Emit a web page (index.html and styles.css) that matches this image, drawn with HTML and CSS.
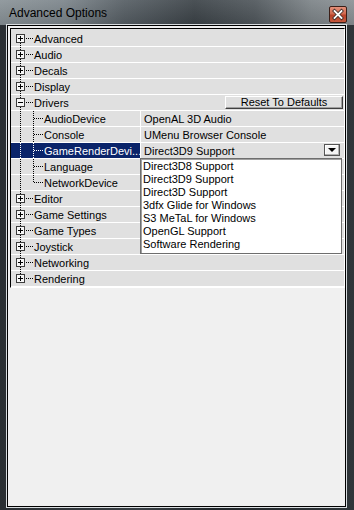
FILE: index.html
```html
<!DOCTYPE html>
<html lang="en">
<head>
    <meta charset="UTF-8">
    <title>Advanced Options</title>
    <link rel="stylesheet" href="styles.css">
</head>
<body>
    <div class="window">
        <div class="titlebar">
            <span class="title">Advanced Options</span>
            <span class="close">
                <svg width="16" height="15" viewBox="0 0 16 15">
                    <path d="M4.5 4 L11.5 11 M11.5 4 L4.5 11" stroke="#3a2a26" stroke-width="3.4" stroke-linecap="square"/>
                    <path d="M4.5 4 L11.5 11 M11.5 4 L4.5 11" stroke="#ffffff" stroke-width="1.8" stroke-linecap="square"/>
                </svg>
            </span>
        </div>
        <div class="client">
            <div class="panel">
                <div class="tree">
                    <div class="vline main"></div>
                    <div class="vline sub"></div>

                    <div class="row"><span class="box plus"></span><span class="dash"></span><span class="label">Advanced</span></div>
                    <div class="row"><span class="box plus"></span><span class="dash"></span><span class="label">Audio</span></div>
                    <div class="row"><span class="box plus"></span><span class="dash"></span><span class="label">Decals</span></div>
                    <div class="row"><span class="box plus"></span><span class="dash"></span><span class="label">Display</span></div>
                    <div class="row"><span class="box minus"></span><span class="dash"></span><span class="label">Drivers</span>
                        <button class="reset">Reset To Defaults</button>
                    </div>

                    <div class="row child">
                        <div class="name"><span class="dash long"></span><span class="label">AudioDevice</span></div>
                        <div class="value">OpenAL 3D Audio</div>
                    </div>
                    <div class="row child">
                        <div class="name"><span class="dash long"></span><span class="label">Console</span></div>
                        <div class="value">UMenu Browser Console</div>
                    </div>
                    <div class="row child selected">
                        <div class="name"><span class="dash long"></span><span class="label">GameRenderDevi...</span></div>
                        <div class="value">Direct3D9 Support<span class="arrow"></span></div>
                    </div>
                    <div class="row child">
                        <div class="name"><span class="dash long"></span><span class="label">Language</span></div>
                        <div class="value"></div>
                    </div>
                    <div class="row child">
                        <div class="name"><span class="dash long"></span><span class="label">NetworkDevice</span></div>
                        <div class="value"></div>
                    </div>

                    <div class="row"><span class="box plus"></span><span class="dash"></span><span class="label">Editor</span></div>
                    <div class="row"><span class="box plus"></span><span class="dash"></span><span class="label">Game Settings</span></div>
                    <div class="row"><span class="box plus"></span><span class="dash"></span><span class="label">Game Types</span></div>
                    <div class="row"><span class="box plus"></span><span class="dash"></span><span class="label">Joystick</span></div>
                    <div class="row"><span class="box plus"></span><span class="dash"></span><span class="label">Networking</span></div>
                    <div class="row"><span class="box plus"></span><span class="dash"></span><span class="label">Rendering</span></div>

                    <ul class="dropdown">
                        <li>Direct3D8 Support</li>
                        <li>Direct3D9 Support</li>
                        <li>Direct3D Support</li>
                        <li>3dfx Glide for Windows</li>
                        <li>S3 MeTaL for Windows</li>
                        <li>OpenGL Support</li>
                        <li>Software Rendering</li>
                    </ul>
                </div>
            </div>
        </div>
    </div>
</body>
</html>
```

FILE: styles.css
```css
body {
    margin: 0;
    background: #23282c;
    font-family: "Liberation Sans", Arial, sans-serif;
}

.window {
    width: 354px;
    height: 510px;
    box-sizing: border-box;
    padding: 0 8px 3px 7px;
    display: flex;
    flex-direction: column;
    background: linear-gradient(90deg, #2a2f33 0%, #3a4045 40%, #22272b 60%, #2f3539 100%);
}

.titlebar {
    height: 25px;
    margin: 0 -8px 0 -7px;
    padding: 0 8px 0 9px;
    display: flex;
    align-items: center;
    justify-content: space-between;
    background:
        linear-gradient(180deg, rgba(255,255,255,0.08) 0%, rgba(0,0,0,0.1) 100%),
        linear-gradient(90deg, #8a9398 0%, #7c858b 18%, #565e64 35%, #3c4348 55%, #50575c 72%, #7d8488 88%, #8c9296 100%);
}

.title {
    font-size: 12px;
    color: #000;
    margin-top: 1px;
}

.close {
    width: 16px;
    height: 15px;
    margin-right: -1px;
    margin-top: 4px;
    border: 1px solid #3b1f18;
    border-radius: 2px;
    background: linear-gradient(180deg, #e4907a 0%, #d06a50 45%, #b8422a 55%, #c6583c 100%);
    display: flex;
}

.client {
    flex: 1;
    background: #f0f0f0;
    border: 1px solid #000;
    box-shadow: 0 0 0 1px #d8dcdf;
    padding: 2px 0 0 2px;
}

.panel {
    border-top: 1px solid #000;
    border-left: 1px solid #000;
    border-right: 1px solid #fff;
    border-bottom: 1px solid #fff;
    background: #e0e0e0;
    padding-top: 2px;
}

.tree {
    position: relative;
    font-size: 11px;
    color: #000;
}

.row {
    height: 15px;
    border-bottom: 1px solid #fff;
    display: flex;
    align-items: center;
    padding-left: 5px;
}

.box {
    width: 7px;
    height: 7px;
    border: 1px solid #3c3c3c;
    background: #f6f6f6;
    position: relative;
    flex: none;
}

.box::before {
    content: "";
    position: absolute;
    left: 1px;
    top: 3px;
    width: 5px;
    height: 1px;
    background: #000;
}

.box.plus::after {
    content: "";
    position: absolute;
    left: 3px;
    top: 1px;
    width: 1px;
    height: 5px;
    background: #000;
}

.dash {
    width: 7px;
    height: 1px;
    flex: none;
    background: repeating-linear-gradient(90deg, #000 0 1px, transparent 1px 2px);
    margin-left: 1px;
}

.dash.long {
    width: 9px;
    margin-left: 23px;
}

.label {
    margin-left: 1px;
    white-space: nowrap;
}

.vline {
    position: absolute;
    width: 1px;
    background: repeating-linear-gradient(180deg, #000 0 1px, transparent 1px 2px);
}

.vline.main {
    left: 9px;
    top: 12px;
    height: 232px;
}

.vline.sub {
    left: 22px;
    top: 80px;
    height: 72px;
}

.reset {
    margin-left: auto;
    margin-right: 1px;
    width: 118px;
    height: 13px;
    padding: 0;
    font-family: inherit;
    font-size: 11px;
    line-height: 11px;
    color: #000;
    background: #e0e0e0;
    border: 1px solid;
    border-color: #fff #404040 #404040 #fff;
    box-shadow: inset -1px -1px #a0a0a0;
}

.row.child {
    padding-left: 0;
}

.child .name {
    width: 129px;
    height: 15px;
    display: flex;
    align-items: center;
    flex: none;
}

.child .value {
    flex: 1;
    height: 15px;
    border-left: 1px solid #fff;
    padding-left: 3px;
    display: flex;
    align-items: center;
    position: relative;
}

.selected .name {
    position: relative;
    z-index: 1;
    color: #fff;
    background:
        repeating-linear-gradient(180deg, #fff 0 1px, transparent 1px 2px) 9px 0 / 1px 100% no-repeat,
        repeating-linear-gradient(180deg, #fff 0 1px, transparent 1px 2px) 22px 0 / 1px 100% no-repeat,
        #0a246a;
}

.selected .dash {
    background: repeating-linear-gradient(90deg, #fff 0 1px, transparent 1px 2px);
}

.arrow {
    position: absolute;
    right: 4px;
    top: 1px;
    width: 14px;
    height: 10px;
    border: 1px solid #555;
    background: #f4f4f4;
    box-shadow: inset -1px -1px #b0b0b0, inset 1px 1px #fff;
}

.arrow::after {
    content: "";
    position: absolute;
    left: 3px;
    top: 3px;
    border-left: 4px solid transparent;
    border-right: 4px solid transparent;
    border-top: 4px solid #000;
}

.dropdown {
    position: absolute;
    left: 129px;
    top: 127px;
    width: 200px;
    margin: 0;
    padding: 1px 0 2px;
    list-style: none;
    background: #fff;
    border: 1px solid #6e6e6e;
    box-shadow: inset 1px 1px #a0a0a0;
}

.dropdown li {
    height: 13px;
    line-height: 13px;
    padding-left: 2px;
}
```
